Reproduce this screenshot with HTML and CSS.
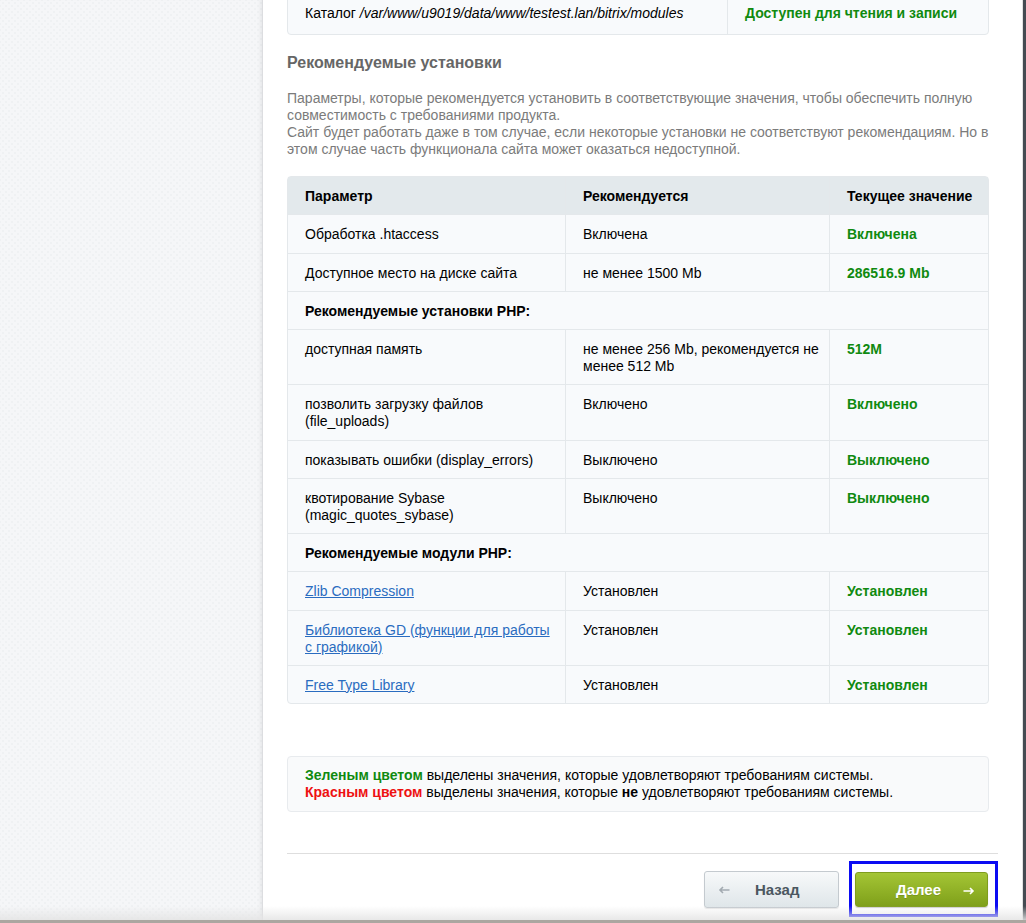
FILE: index.html
```html
<!DOCTYPE html>
<html lang="ru">
<head>
    <meta charset="UTF-8">
    <meta name="viewport" content="width=device-width, initial-scale=1.0">
    <title>Установка продукта</title>
    <link rel="stylesheet" href="styles.css">
</head>
<body>
    <div class="frame">
        <div class="sidebar"></div>
        <div class="main">
            <div class="content">
                <table class="grid prev">
                    <tr>
                        <td class="c1">Каталог <i>/var/www/u9019/data/www/testest.lan/bitrix/modules</i></td>
                        <td class="c3 ok">Доступен для чтения и записи</td>
                    </tr>
                </table>

                <h3 class="title">Рекомендуемые установки</h3>
                <p class="note">
                    Параметры, которые рекомендуется установить в соответствующие значения, чтобы обеспечить полную совместимость с требованиями продукта.<br>
                    Сайт будет работать даже в том случае, если некоторые установки не соответствуют рекомендациям. Но в этом случае часть функционала сайта может оказаться недоступной.
                </p>

                <table class="grid">
                    <tr class="head">
                        <th class="col-a">Параметр</th>
                        <th class="col-b">Рекомендуется</th>
                        <th class="col-c">Текущее значение</th>
                    </tr>
                    <tr>
                        <td>Обработка .htaccess</td>
                        <td>Включена</td>
                        <td class="ok">Включена</td>
                    </tr>
                    <tr>
                        <td>Доступное место на диске сайта</td>
                        <td>не менее 1500 Mb</td>
                        <td class="ok">286516.9 Mb</td>
                    </tr>
                    <tr>
                        <td colspan="3" class="section">Рекомендуемые установки PHP:</td>
                    </tr>
                    <tr>
                        <td>доступная память</td>
                        <td>не менее 256 Mb, рекомендуется не менее 512 Mb</td>
                        <td class="ok">512M</td>
                    </tr>
                    <tr>
                        <td>позволить загрузку файлов (file_uploads)</td>
                        <td>Включено</td>
                        <td class="ok">Включено</td>
                    </tr>
                    <tr>
                        <td>показывать ошибки (display_errors)</td>
                        <td>Выключено</td>
                        <td class="ok">Выключено</td>
                    </tr>
                    <tr>
                        <td>квотирование Sybase (magic_quotes_sybase)</td>
                        <td>Выключено</td>
                        <td class="ok">Выключено</td>
                    </tr>
                    <tr>
                        <td colspan="3" class="section">Рекомендуемые модули PHP:</td>
                    </tr>
                    <tr>
                        <td><a href="#">Zlib Compression</a></td>
                        <td>Установлен</td>
                        <td class="ok">Установлен</td>
                    </tr>
                    <tr>
                        <td><a href="#">Библиотека GD (функции для работы с графикой)</a></td>
                        <td>Установлен</td>
                        <td class="ok">Установлен</td>
                    </tr>
                    <tr>
                        <td><a href="#">Free Type Library</a></td>
                        <td>Установлен</td>
                        <td class="ok">Установлен</td>
                    </tr>
                </table>

                <div class="legend">
                    <span class="green">Зеленым цветом</span> выделены значения, которые удовлетворяют требованиям системы.<br>
                    <span class="red">Красным цветом</span> выделены значения, которые <b>не</b> удовлетворяют требованиям системы.
                </div>

                <div class="buttons">
                    <button class="btn btn-back">
                        <svg class="arrow" width="12" height="10" viewBox="0 0 12 10"><path d="M11.5 5H2M5 2L2 5l3 3" fill="none" stroke="#a3abb1" stroke-width="1.6"/></svg>
                        Назад
                    </button>
                    <div class="focus-ring">
                        <button class="btn btn-next">
                            Далее
                            <svg class="arrow" width="12" height="10" viewBox="0 0 12 10"><path d="M0.5 5H10M7 2l3 3-3 3" fill="none" stroke="#fff" stroke-width="1.6"/></svg>
                        </button>
                    </div>
                </div>
            </div>
        </div>
        <div class="edge"></div>
    </div>
    <div class="statusbar"></div>
</body>
</html>
```

FILE: styles.css
```css
html, body {
    height: 100%;
}

body {
    margin: 0;
    font-family: "Liberation Sans", Arial, sans-serif;
    font-size: 14px;
    color: #000;
    display: flex;
    flex-direction: column;
    overflow: hidden;
}

.frame {
    flex: 1;
    display: flex;
    position: relative;
    min-height: 0;
}

/* soft shadow just above the bottom bar */
.frame::after {
    content: "";
    position: absolute;
    left: 0;
    right: 0;
    bottom: 0;
    height: 14px;
    background: linear-gradient(rgba(235, 235, 235, 0), rgba(228, 228, 228, 0.85));
    pointer-events: none;
}

.sidebar {
    width: 262px;
    flex: none;
    background-color: #f5f6f8;
    background-image:
        radial-gradient(#eff1f3 1px, transparent 1.2px),
        radial-gradient(#eff1f3 1px, transparent 1.2px);
    background-size: 6px 6px;
    background-position: 0 0, 3px 3px;
    border-right: 1px solid #dcdde0;
    box-shadow: inset -4px 0 4px -3px rgba(0, 0, 0, 0.08);
}

.main {
    flex: 1;
    background: #fff;
    border-right: 1px solid #e2e2e2;
    overflow: hidden;
}

.edge {
    width: 3px;
    flex: none;
    background: #454b52;
}

.statusbar {
    height: 3px;
    background: #aba6a0;
}

.content {
    padding: 0 33px 0 24px;
    margin-top: -7px;
}

/* tables */
.grid {
    width: 100%;
    border-collapse: separate;
    border-spacing: 0;
    border: 1px solid #e4e8eb;
    border-radius: 4px;
    background: #f8fafc;
    table-layout: fixed;
}

.grid td, .grid th {
    padding: 11px 8px 9.25px 17px;
    line-height: 17px;
    vertical-align: top;
    text-align: left;
    border-right: 1px solid #e4e8eb;
    border-bottom: 1px solid #e4e8eb;
}

.grid td:last-child, .grid th:last-child {
    border-right: none;
}

.grid tr:last-child td {
    border-bottom: none;
}

.grid .head th {
    background: #e3e9ec;
    font-weight: bold;
    white-space: nowrap;
}

.col-a { width: 252px; }
.col-b { width: 238px; }

.prev td {
    padding-bottom: 12px;
}

.prev .c1 { width: 414px; }

.grid .section {
    font-weight: bold;
}

.ok {
    color: #108a10;
    font-weight: bold;
}

.grid a {
    color: #2a6cc0;
}

.title {
    margin: 18px 0 17px;
    font-size: 16px;
    line-height: 20px;
    color: #666;
    font-weight: bold;
}

.note {
    margin: 0 0 18px;
    color: #7b7b7b;
    line-height: 17px;
}

.legend {
    margin-top: 52px;
    padding: 10px 17px 10px 17px;
    line-height: 17px;
    background: #f9fafb;
    border: 1px solid #e8ebee;
    border-radius: 4px;
}

.green {
    color: #108a10;
    font-weight: bold;
}

.red {
    color: #ee1111;
    font-weight: bold;
}

.buttons {
    margin-top: 41px;
    border-top: 1px solid #dedede;
    padding-top: 7px;
    display: flex;
    justify-content: flex-end;
    align-items: center;
    margin-right: -9px;
}

.btn {
    border-radius: 3px;
    font-family: "Liberation Sans", Arial, sans-serif;
    font-size: 15px;
    font-weight: bold;
    cursor: pointer;
    display: flex;
    align-items: center;
    padding: 0;
}

.btn-back {
    width: 135px;
    height: 37px;
    margin-right: 10px;
    color: #4b5760;
    background: linear-gradient(#f7f9fa, #dfe6e9);
    border: 1px solid #c4cacf;
    box-shadow: 0 1px 1px rgba(0, 0, 0, 0.1);
}

.btn-back .arrow {
    margin: 2px 25px 0 13px;
}

.focus-ring {
    border: 3px solid #0c0cf2;
    padding: 8px 7px 7px 3px;
}

.btn-next {
    width: 133px;
    height: 35px;
    color: #fff;
    background: linear-gradient(#a4c535, #7fa01a);
    border: 1px solid #7f9d1e;
    box-shadow: 0 1px 1px rgba(0, 0, 0, 0.2);
    text-shadow: 0 1px 0 rgba(0, 0, 0, 0.15);
    padding-left: 40px;
    justify-content: flex-start;
}

.btn-next .arrow {
    margin: 2px 0 0 22px;
}
```
